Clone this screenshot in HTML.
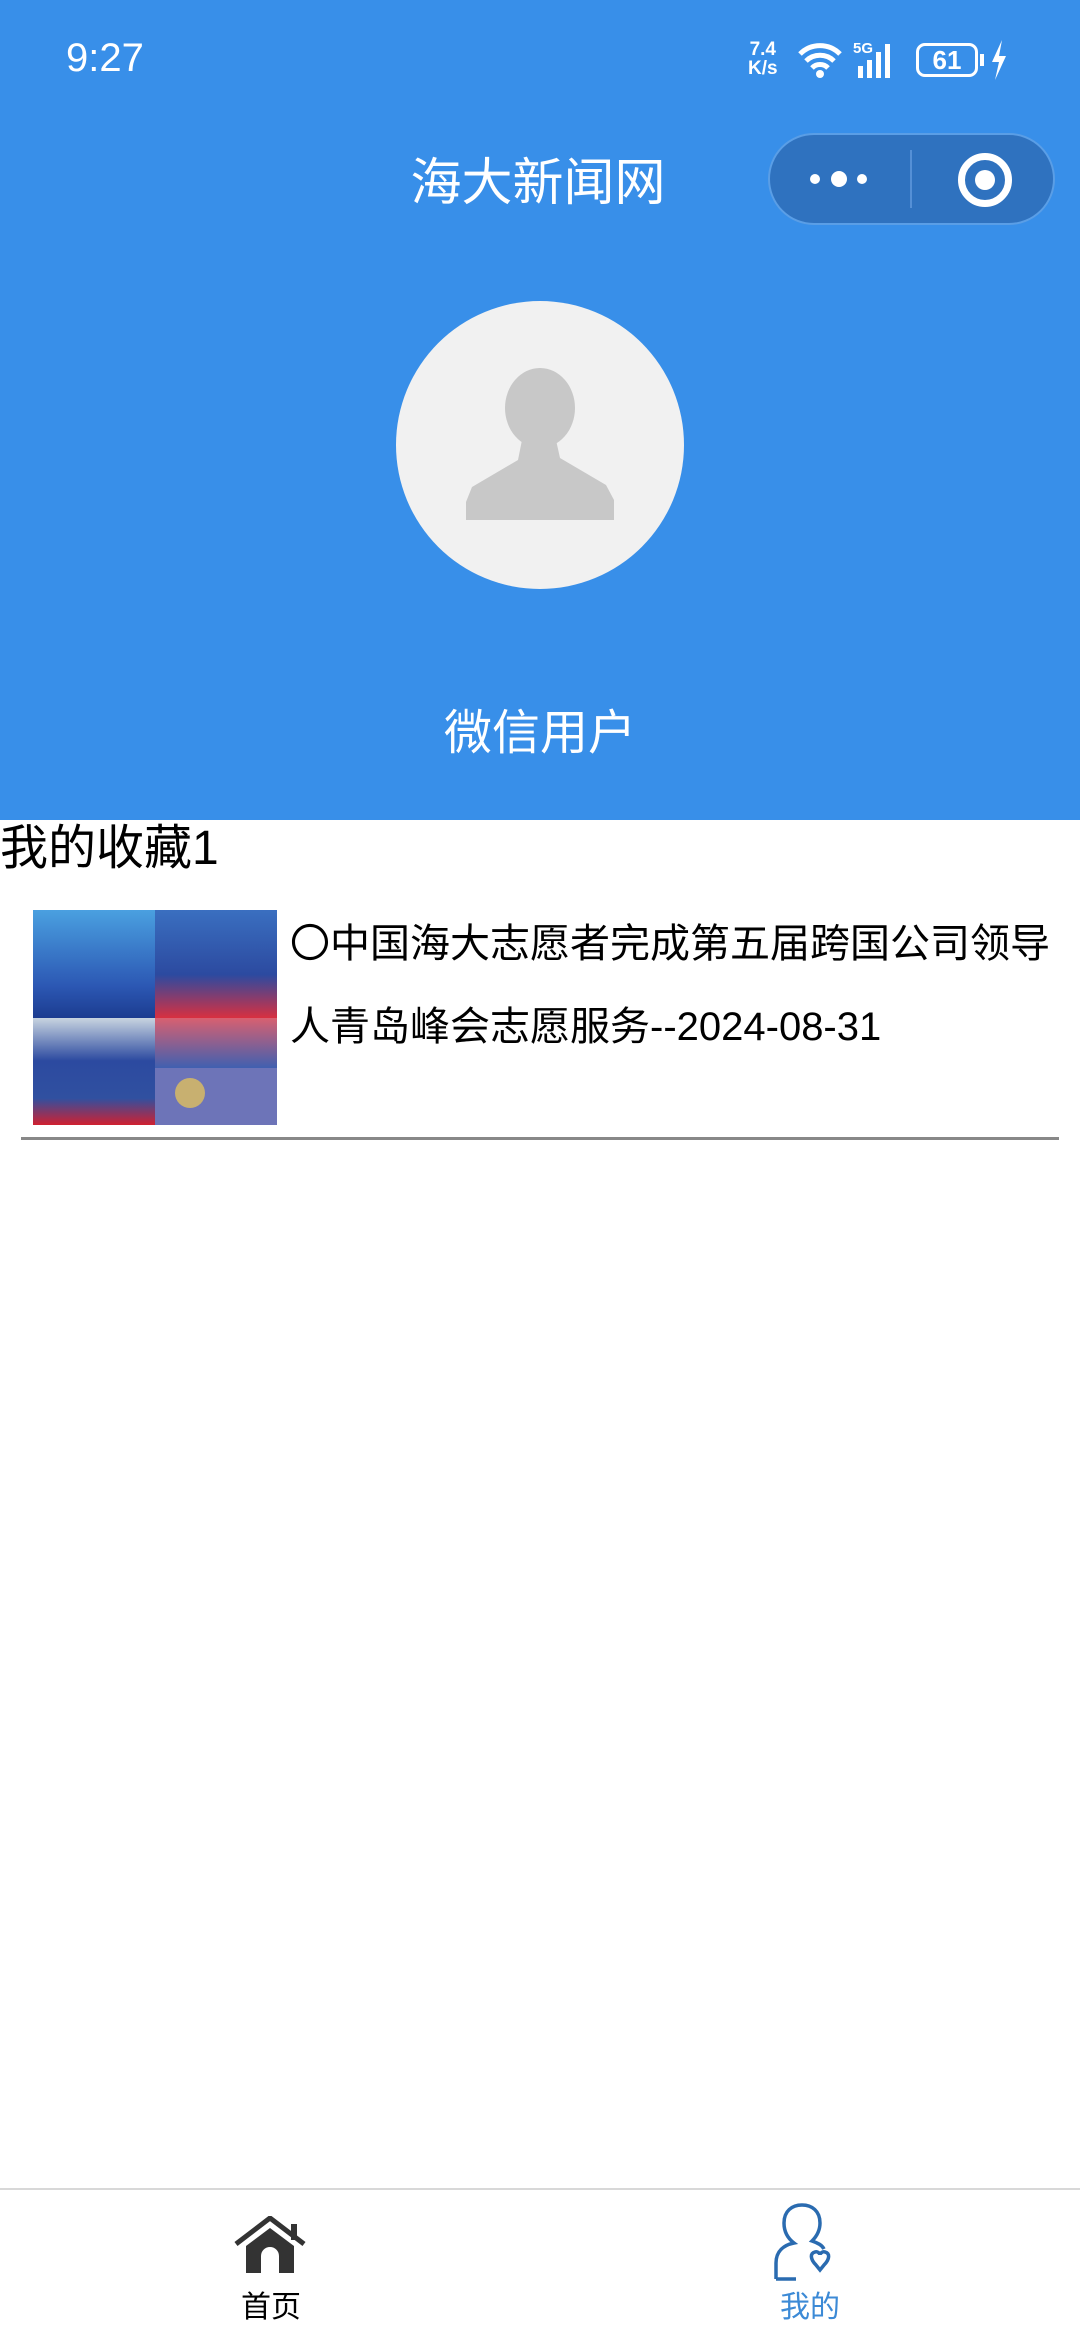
<!DOCTYPE html>
<html><head><meta charset="utf-8"><style>
*{margin:0;padding:0;box-sizing:border-box}
body{width:1080px;height:2340px;background:#fff;position:relative;overflow:hidden;font-family:"Liberation Sans","Noto Sans CJK SC",sans-serif}
.hdr{position:absolute;left:0;top:0;width:1080px;height:820px;background:#388fe9}
.abs{position:absolute}
</style></head><body>
<div class="hdr"></div>
<div class="abs" style="left:66px;top:36px;color:#fff;font-size:40px">9:27</div>
<div class="abs" style="left:748px;top:40px;color:#fff;font-size:19px;line-height:19px;font-weight:bold;text-align:center">7.4<br>K/s</div>
<svg class="abs" style="left:796px;top:40px" width="48" height="40" viewBox="0 0 48 40"><path d="M4 14a28 28 0 0 1 40 0M10 21a20 20 0 0 1 28 0M16 28a11 11 0 0 1 16 0" stroke="#fff" stroke-width="5" fill="none"/><circle cx="24" cy="34" r="4" fill="#fff"/></svg>
<div class="abs" style="left:853px;top:40px;color:#fff;font-size:15px;font-weight:bold">5G</div>
<svg class="abs" style="left:856px;top:40px" width="48" height="40"><rect x="2" y="26" width="5" height="12" fill="#fff"/><rect x="11" y="20" width="5" height="18" fill="#fff"/><rect x="20" y="12" width="5" height="26" fill="#fff"/><rect x="29" y="4" width="5" height="34" fill="#fff"/></svg>
<div class="abs" style="left:916px;top:43px;width:62px;height:34px;border:3px solid #fff;border-radius:9px;color:#fff;font-size:26px;font-weight:bold;text-align:center;line-height:28px">61</div>
<div class="abs" style="left:980px;top:54px;width:4px;height:12px;background:#fff"></div>
<svg class="abs" style="left:990px;top:40px" width="18" height="40"><path d="M12 0L2 22h7L5 40 16 16H9z" fill="#fff"/></svg>
<div class="abs" style="left:0;top:141px;width:1076px;text-align:center;color:#fff;font-size:51px">海大新闻网</div>
<div class="abs" style="left:768px;top:133px;width:287px;height:92px;border-radius:46px;background:#2f72bf;border:2px solid #5a9ee6"></div>
<div class="abs" style="left:910px;top:150px;width:2px;height:58px;background:#5590d6"></div>
<div class="abs" style="left:810px;top:174px;width:10px;height:10px;border-radius:50%;background:#fff"></div>
<div class="abs" style="left:831px;top:171px;width:16px;height:16px;border-radius:50%;background:#fff"></div>
<div class="abs" style="left:857px;top:174px;width:10px;height:10px;border-radius:50%;background:#fff"></div>
<div class="abs" style="left:958px;top:153px;width:54px;height:54px;border-radius:50%;border:7px solid #fff"></div>
<div class="abs" style="left:975px;top:170px;width:20px;height:20px;border-radius:50%;background:#fff"></div>
<div class="abs" style="left:396px;top:301px;width:288px;height:288px;border-radius:50%;background:#f1f1f1"></div>
<svg class="abs" style="left:460px;top:365px" width="160" height="160" viewBox="0 0 160 160"><ellipse cx="80" cy="43" rx="35" ry="40" fill="#c8c8c8"/><path d="M62 75L58 95 12 122 6 137v18H154V135L146 120 100 93 96 75z" fill="#c8c8c8"/></svg>
<div class="abs" style="left:0;top:693px;width:1080px;text-align:center;color:#fff;font-size:48px">微信用户</div>
<div class="abs" style="left:0;top:808px;color:#000;font-size:48px">我的收藏1</div>
<div class="abs" style="left:33px;top:910px;width:244px;height:215px;overflow:hidden">
<div class="abs" style="left:0;top:0;width:122px;height:108px;background:linear-gradient(#4aa0e0,#2c58b4 70%,#1c3c90)"></div>
<div class="abs" style="left:122px;top:0;width:122px;height:108px;background:linear-gradient(#3a6fc0,#2c4aa0 60%,#d83040)"></div>
<div class="abs" style="left:0;top:108px;width:122px;height:107px;background:linear-gradient(#c8d4e0,#2c4aa0 40%,#3050a0 75%,#d02030)"></div>
<div class="abs" style="left:122px;top:108px;width:122px;height:50px;background:linear-gradient(#d86070,#4060b0)"></div>
<div class="abs" style="left:122px;top:158px;width:122px;height:57px;background:#6d74b8"></div>
<div class="abs" style="left:142px;top:168px;width:30px;height:30px;border-radius:50%;background:#c8b070"></div>
</div>
<div class="abs" style="left:290px;top:903px;width:785px;color:#000;font-size:40px;line-height:83px;white-space:nowrap">〇中国海大志愿者完成第五届跨国公司领导<br>人青岛峰会志愿服务--2024-08-31</div>
<div class="abs" style="left:21px;top:1137px;width:1038px;height:3px;background:#888"></div>
<div class="abs" style="left:0;top:2188px;width:1080px;height:2px;background:#d8d8d8"></div>
<svg class="abs" style="left:234px;top:2216px" width="72" height="60" viewBox="0 0 72 60"><path d="M2 28L36 2 70 28" stroke="#333" stroke-width="5" fill="none"/><rect x="57" y="8" width="6" height="16" fill="#333"/><path d="M12 30L36 12 60 30V57H45V40a9 9 0 0 0-18 0V57H12z" fill="#333"/></svg>
<div class="abs" style="left:235px;top:2282px;width:72px;text-align:center;font-size:30px;color:#000">首页</div>
<svg class="abs" style="left:770px;top:2203px" width="80" height="80" viewBox="0 0 80 80"><path d="M6 76V60C6 48 14 42 24 40 16 34 14 26 14 20 14 8 22 2 32 2S50 8 50 20C50 26 48 32 42 38 48 40 52 42 54 46" stroke="#2a6bb0" stroke-width="3.5" fill="none"/><path d="M6 76H26" stroke="#2a6bb0" stroke-width="3.5"/><path d="M46 62C40 56 40 50 45 49 48 48 50 51 50 52 50 51 52 48 55 49 60 50 60 56 54 62L50 67z" stroke="#2a6bb0" stroke-width="3.5" fill="none"/></svg>
<div class="abs" style="left:770px;top:2282px;width:80px;text-align:center;font-size:30px;color:#3c8ad6">我的</div>
</body></html>
